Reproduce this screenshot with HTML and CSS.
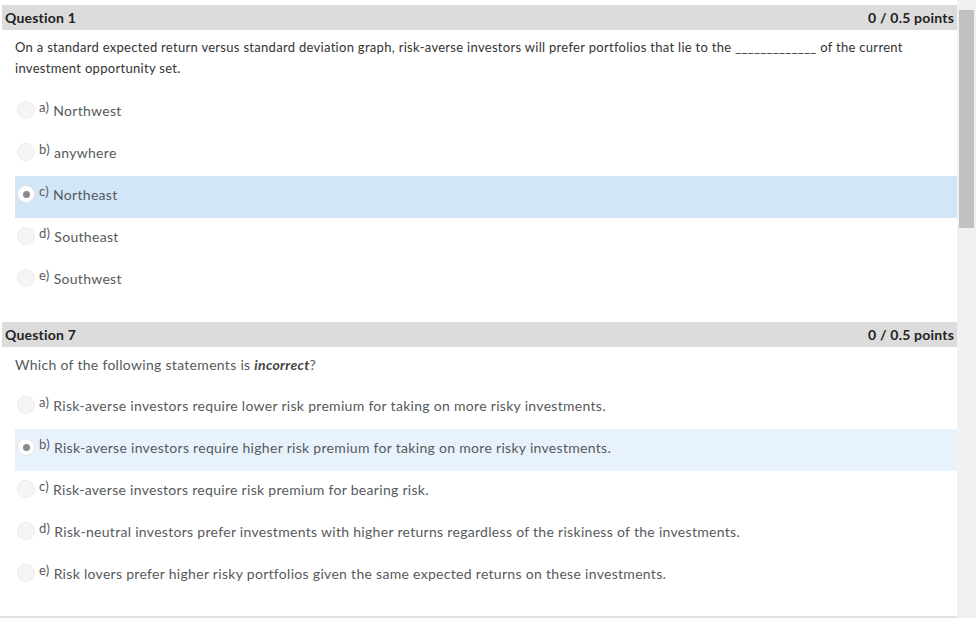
FILE: index.html
```html
<!doctype html>
<html>
<head>
<meta charset="utf-8">
<title>Quiz</title>
<link rel="stylesheet" href="styles.css">
</head>
<body>
<div class="page">
    <div class="main">
        <div class="question">
            <div class="q-head"><span>Question 1</span><span>0 / 0.5 points</span></div>
            <div class="q-text q-small">On a standard expected return versus standard deviation graph, risk-averse investors will prefer portfolios that lie to the _____________ of the current investment opportunity set.</div>
            <div class="options">
                <div class="opt"><span class="radio"></span><span class="letter">a)</span>Northwest</div>
                <div class="opt"><span class="radio"></span><span class="letter">b)</span>anywhere</div>
                <div class="opt opt-focus"><span class="radio checked"></span><span class="letter">c)</span>Northeast</div>
                <div class="opt"><span class="radio"></span><span class="letter">d)</span>Southeast</div>
                <div class="opt"><span class="radio"></span><span class="letter">e)</span>Southwest</div>
            </div>
        </div>
        <div class="question">
            <div class="q-head"><span>Question 7</span><span>0 / 0.5 points</span></div>
            <div class="q-text">Which of the following statements is <b><i>incorrect</i></b>?</div>
            <div class="options">
                <div class="opt"><span class="radio"></span><span class="letter">a)</span>Risk-averse investors require lower risk premium for taking on more risky investments.</div>
                <div class="opt opt-selected"><span class="radio checked"></span><span class="letter">b)</span>Risk-averse investors require higher risk premium for taking on more risky investments.</div>
                <div class="opt"><span class="radio"></span><span class="letter">c)</span>Risk-averse investors require risk premium for bearing risk.</div>
                <div class="opt"><span class="radio"></span><span class="letter">d)</span>Risk-neutral investors prefer investments with higher returns regardless of the riskiness of the investments.</div>
                <div class="opt"><span class="radio"></span><span class="letter">e)</span>Risk lovers prefer higher risky portfolios given the same expected returns on these investments.</div>
            </div>
        </div>
        <div class="bottom-line"></div>
    </div>
    <div class="scrollbar"><div class="thumb"></div></div>
</div>
</body>
</html>
```

FILE: styles.css
```css
html, body { margin: 0; height: 100%; overflow: hidden; }
body { font-family: Lato, "Open Sans", Arial, sans-serif; color: #565a5c; background: #fff; letter-spacing: 0.3px; }
.page { display: flex; height: 618px; }
.main { flex: 1; padding-left: 2px; }
.scrollbar { width: 19px; background: #f1f1f1; padding: 10px 2px 0 2px; box-sizing: border-box; }
.thumb { height: 218px; background: #c1c1c1; }

.question { margin-top: 5px; }
.question + .question { margin-top: 20px; }
.q-head { display: flex; justify-content: space-between; height: 25px; line-height: 25px; padding: 0 3px; background: #dcdcdc; font-size: 14px; font-weight: bold; color: #222; letter-spacing: 0.2px; }
.q-text { margin: 7px 0 0 13px; font-size: 14px; line-height: 21px; color: #565a5c; }
.q-small { font-size: 13px; color: #333; padding-right: 40px; }
.q-text b { color: #444; }

.options { margin: 12px 0 0 13px; }
.q-small + .options { margin-top: 13px; }
.opt { display: flex; align-items: center; height: 42px; box-sizing: border-box; padding: 0 0 6px 2px; font-size: 14px; color: #565a5c; }
.opt-focus { background: #d3e6f8; }
.opt-selected { background: #e8f2fc; }
.letter { font-size: 13px; margin: 0 4px 0 4px; position: relative; top: -3px; }
.radio { width: 18px; height: 18px; border-radius: 50%; background: #f5f5f5; border: 1px solid #ececec; box-sizing: border-box; display: flex; align-items: center; justify-content: center; }
.radio.checked { background: #fff; border-color: #e4e4e4; }
.radio.checked::after { content: ""; width: 7px; height: 7px; border-radius: 50%; background: #8a8a8a; }

.bottom-line { margin-top: 19px; height: 2px; background: #e2e2e2; margin-left: -2px; }
```
